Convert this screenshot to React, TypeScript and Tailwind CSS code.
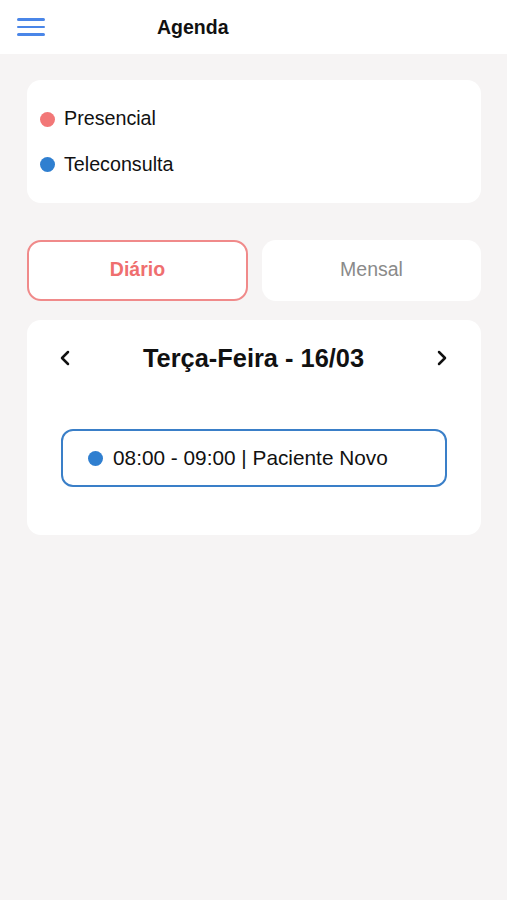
import { ChevronLeft, ChevronRight } from "lucide-react";

function Dot({ color }: { color: string }) {
  return <span className={`inline-block w-[15px] h-[15px] rounded-full shrink-0 ${color}`} />;
}

export default function App() {
  return (
    <div className="min-h-[900px] bg-[#f6f4f4] font-['Liberation_Sans',Arial,sans-serif] text-[#111]">
      <header className="h-[54px] bg-white flex items-center relative">
        <button type="button" className="ml-[17px] w-[28px] flex flex-col gap-[5px]">
          <span className="block h-[2.5px] bg-[#4a86e8] rounded" />
          <span className="block h-[2.5px] bg-[#4a86e8] rounded" />
          <span className="block h-[2.5px] bg-[#4a86e8] rounded" />
        </button>
        <h1 className="absolute left-[157px] top-[13px] text-[19.5px] font-bold">Agenda</h1>
      </header>

      <div className="pl-[27px] pr-[26px] pt-[26px]">
        <div className="bg-white rounded-[14px] h-[123px] flex flex-col justify-center gap-[16px] pl-[13px] pt-[1px]">
          <div className="flex items-center gap-[9px] text-[19.7px]">
            <Dot color="bg-[#f27777]" />
            <span>Presencial</span>
          </div>
          <div className="flex items-center gap-[9px] text-[19.7px]">
            <Dot color="bg-[#2f7fd0]" />
            <span>Teleconsulta</span>
          </div>
        </div>

        <div className="flex gap-[14px] mt-[37px]">
          <button type="button" className="flex-1 h-[61px] rounded-[14px] bg-white border-2 border-[#f08a8a] text-[#ef6f6f] font-bold text-[19.5px] pb-[2px]">
            Diário
          </button>
          <button type="button" className="w-[219px] h-[61px] rounded-[14px] bg-white text-[#8a8a8a] text-[19.5px] pb-[2px]">
            Mensal
          </button>
        </div>

        <div className="bg-white rounded-[14px] mt-[19px] h-[215px] px-[34px] pt-[19px]">
          <div className="flex items-center justify-between">
            <ChevronLeft size={24} strokeWidth={2.5} className="-ml-[8px]" />
            <h2 className="text-[25.4px] font-bold">Terça-Feira - 16/03</h2>
            <ChevronRight size={24} strokeWidth={2.5} className="-mr-[7px]" />
          </div>
          <div className="mt-[52px] h-[58px] border-2 border-[#3a7fc8] rounded-[12px] flex items-center gap-[10px] pl-[25px] w-[386px]">
            <Dot color="bg-[#2f7fd0]" />
            <span className="text-[20.8px] pb-[1px]">08:00 - 09:00 | Paciente Novo</span>
          </div>
        </div>
      </div>
    </div>
  );
}
